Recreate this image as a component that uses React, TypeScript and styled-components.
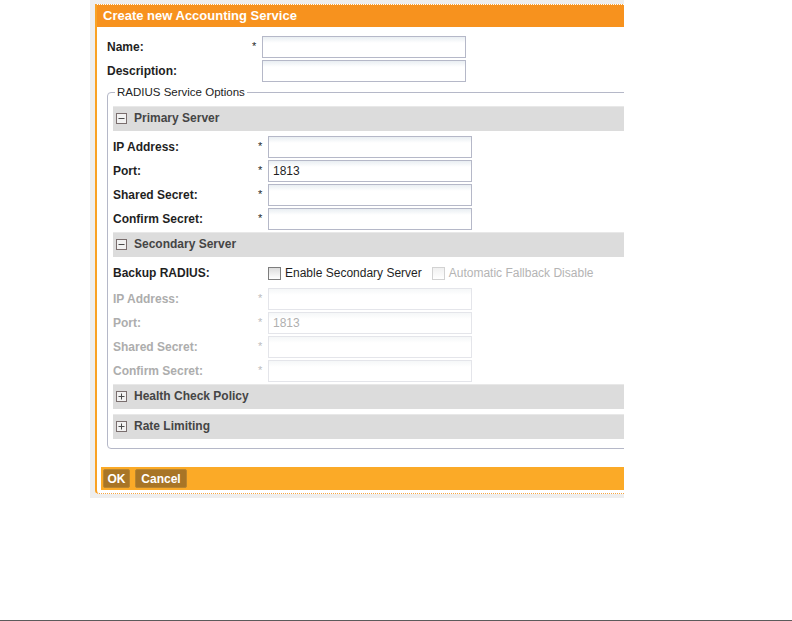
import React from "react";
import styled, { createGlobalStyle } from "styled-components";

const GlobalStyle = createGlobalStyle`
  html, body {
    margin: 0;
    padding: 0;
    background: #ffffff;
  }
  body {
    font-family: "Liberation Sans", Arial, sans-serif;
    font-size: 12px;
    color: #1f1f1f;
  }
`;

const Page = styled.div`
  height: 621px;
  display: flex;
  flex-direction: column;
`;

const Frame = styled.div`
  margin-left: 90px;
  width: 534px;
  padding: 4px 0 4px 5px;
  background: #eeeeee;
  overflow: hidden;
  box-sizing: border-box;
`;

const Dialog = styled.div`
  width: 720px;
  background: #ffffff;
  border-top: 1px dotted #f7a541;
  border-bottom: 1px dotted #f7a541;
  border-left: 2px solid #f9a224;
  border-bottom-left-radius: 4px;
`;

const Header = styled.div`
  height: 22px;
  line-height: 21px;
  padding-left: 6px;
  background: #f7921e;
  color: #ffffff;
  font-weight: bold;
  font-size: 13px;
`;

const Body = styled.div`
  padding: 9px 0 0 10px;
`;

const Row = styled.div`
  display: grid;
  grid-template-columns: 142px 13px 204px;
  align-items: center;
  height: 22px;
  margin-bottom: 2px;
`;

const Label = styled.label<{ disabled?: boolean }>`
  font-weight: bold;
  color: ${(p) => (p.disabled ? "#adadad" : "#1f1f1f")};
`;

const Star = styled.span<{ disabled?: boolean }>`
  padding-left: 3px;
  font-size: 11px;
  color: ${(p) => (p.disabled ? "#bdbdbd" : "#1f1f1f")};
  align-self: start;
  padding-top: 4px;
`;

const TextInput = styled.input`
  box-sizing: border-box;
  width: 204px;
  height: 22px;
  margin: 0;
  padding: 0 4px;
  border: 1px solid #b5b8c8;
  background: linear-gradient(#e9eef2, #ffffff 6px);
  font-family: "Liberation Sans", Arial, sans-serif;
  font-size: 12px;
  color: #1f1f1f;
  outline: none;

  &:disabled {
    border-color: #e4e5ea;
    background: linear-gradient(#f5f7f8, #ffffff 6px);
    color: #b0b0b0;
  }
`;

const Fieldset = styled.fieldset`
  margin: 3px 0 0 0;
  padding: 7px 5px 9px 5px;
  border: 1px solid #b5b8c8;
  border-radius: 4px;
`;

const Legend = styled.legend`
  margin-left: 2px;
  padding: 0 2px;
  line-height: 14px;
  font-size: 11.5px;
  color: #222222;
`;

const SectionBar = styled.div<{ gap?: number }>`
  display: flex;
  align-items: center;
  gap: 7px;
  height: 25px;
  box-sizing: border-box;
  padding: 0 0 3px 3px;
  margin-top: ${(p) => p.gap ?? 0}px;
  background: #dcdcdc;
  border-top: 1px solid #e8e8e8;
  font-weight: bold;
  font-size: 12px;
  color: #454545;

  svg {
    margin-top: 2px;
  }
`;

const Rows = styled.div<{ top: number }>`
  margin-top: ${(p) => p.top}px;
`;

const CheckRow = styled.div`
  display: grid;
  grid-template-columns: 155px auto;
  align-items: center;
  height: 22px;
  margin: 5px 0 4px 0;
`;

const Checks = styled.div`
  display: flex;
  align-items: center;
  gap: 10px;
`;

const CheckLabel = styled.label<{ disabled?: boolean }>`
  display: flex;
  align-items: center;
  gap: 4px;
  color: ${(p) => (p.disabled ? "#b4b4b4" : "#1f1f1f")};
`;

const Check = styled.input`
  appearance: none;
  margin: 0;
  width: 13px;
  height: 13px;
  border: 1px solid #7d7d7d;
  background: linear-gradient(#dcdcdc, #ffffff);

  &:disabled {
    border-color: #d2d2d2;
    background: linear-gradient(#f0f0f0, #ffffff);
  }
`;

const Footer = styled.div`
  display: flex;
  gap: 5px;
  align-items: center;
  height: 23px;
  margin: 18px 0 3px 4px;
  padding-left: 2px;
  background: #fbaa27;
`;

const Button = styled.button<{ w: number }>`
  width: ${(p) => p.w}px;
  height: 19px;
  padding: 0;
  border: 1px solid #b9852f;
  border-radius: 2px;
  background: #a87526;
  color: #ffffff;
  font-family: "Liberation Sans", Arial, sans-serif;
  font-weight: bold;
  font-size: 12px;
  cursor: pointer;
`;

const BottomRule = styled.div`
  margin-top: auto;
  height: 1px;
  background: #5b5b5b;
`;

const Toggle = ({ open }: { open: boolean }) => (
  <svg width="11" height="11" viewBox="0 0 11 11">
    <rect x="0.5" y="0.5" width="10" height="10" fill="#f2f2f2" stroke="#7a6e6e" />
    <line x1="2.5" y1="5.5" x2="8.5" y2="5.5" stroke="#4a4a4a" />
    {!open && <line x1="5.5" y1="2.5" x2="5.5" y2="8.5" stroke="#4a4a4a" />}
  </svg>
);

type Field = { label: string; value?: string };

const serverFields: Field[] = [
  { label: "IP Address:" },
  { label: "Port:", value: "1813" },
  { label: "Shared Secret:" },
  { label: "Confirm Secret:" },
];

const FieldRow = ({ label, value, disabled, required = true }: Field & { disabled?: boolean; required?: boolean }) => (
  <Row>
    <Label disabled={disabled}>{label}</Label>
    <Star disabled={disabled}>{required ? "*" : ""}</Star>
    <TextInput disabled={disabled} defaultValue={value} />
  </Row>
);

export default function App() {
  return (
    <Page>
      <GlobalStyle />
      <Frame>
        <Dialog>
          <Header>Create new Accounting Service</Header>
          <Body>
            <FieldRow label="Name:" />
            <FieldRow label="Description:" required={false} />
            <Fieldset>
              <Legend>RADIUS Service Options</Legend>
              <SectionBar>
                <Toggle open />
                Primary Server
              </SectionBar>
              <Rows top={5}>
                {serverFields.map((f) => (
                  <FieldRow key={f.label} {...f} />
                ))}
              </Rows>
              <SectionBar>
                <Toggle open />
                Secondary Server
              </SectionBar>
              <CheckRow>
                <Label>Backup RADIUS:</Label>
                <Checks>
                  <CheckLabel>
                    <Check type="checkbox" />
                    Enable Secondary Server
                  </CheckLabel>
                  <CheckLabel disabled>
                    <Check type="checkbox" disabled />
                    Automatic Fallback Disable
                  </CheckLabel>
                </Checks>
              </CheckRow>
              <Rows top={0}>
                {serverFields.map((f) => (
                  <FieldRow key={f.label} {...f} disabled />
                ))}
              </Rows>
              <SectionBar>
                <Toggle open={false} />
                Health Check Policy
              </SectionBar>
              <SectionBar gap={5}>
                <Toggle open={false} />
                Rate Limiting
              </SectionBar>
            </Fieldset>
          </Body>
          <Footer>
            <Button w={27}>OK</Button>
            <Button w={52}>Cancel</Button>
          </Footer>
        </Dialog>
      </Frame>
      <BottomRule />
    </Page>
  );
}
